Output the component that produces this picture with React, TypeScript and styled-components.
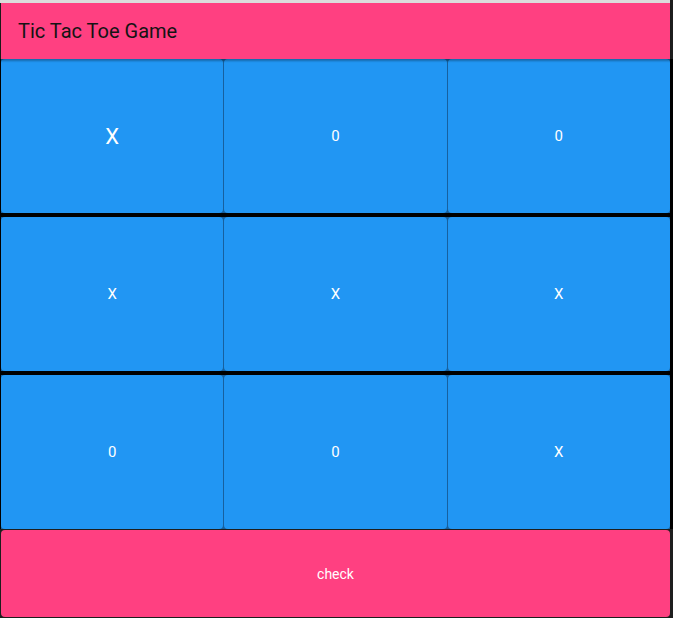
import React from "react";
import styled, { createGlobalStyle } from "styled-components";

const Global = createGlobalStyle`
  html, body { margin: 0; padding: 0; background: #1e1e1e; }
  body { font-family: Roboto, "Noto Sans", sans-serif; }
`;

const Page = styled.div`
  width: 673px;
  height: 618px;
  display: flex;
  flex-direction: column;
  background: #1e1e1e;
  overflow: hidden;
`;

const TopLine = styled.div`
  height: 3px;
  margin-right: 3px;
  background: #dcdcdc;
`;

const AppBar = styled.header`
  height: 56px;
  margin-right: 3px;
  margin-left: 1px;
  background: #ff4081;
  display: flex;
  align-items: center;
  padding-left: 17px;
  box-sizing: border-box;
  font-size: 20px;
  color: #141414;
  box-shadow: 0 2px 2px rgba(0, 0, 0, 0.3);
  position: relative;
  z-index: 1;
`;

const Board = styled.div`
  display: flex;
  flex-direction: column;
  gap: 4px;
  background: #000;
  padding: 0 3px 0 1px;
`;

const Row = styled.div`
  display: flex;
  gap: 1px;
  height: 154px;
  background: #17609e;
`;

const Cell = styled.button<{ $big?: boolean }>`
  flex: 1;
  border: none;
  margin: 0;
  padding: 0;
  background: #2196f3;
  border-radius: 4px;
  color: #fff;
  font-family: Roboto, "Noto Sans", sans-serif;
  font-size: ${(p) => (p.$big ? "22px" : "15px")};
  display: flex;
  align-items: center;
  justify-content: center;
  cursor: pointer;
`;

const CheckButton = styled.button`
  margin: 1px 3px 1px 1px;
  height: 87px;
  border: none;
  border-radius: 4px;
  background: #ff4081;
  color: #fff;
  font-family: Roboto, "Noto Sans", sans-serif;
  font-size: 14px;
  cursor: pointer;
`;

const board = [
  ["X", "0", "0"],
  ["X", "X", "X"],
  ["0", "0", "X"],
];

export default function App() {
  return (
    <>
      <Global />
      <Page>
        <TopLine />
        <AppBar>Tic Tac Toe Game</AppBar>
        <Board>
          {board.map((row, r) => (
            <Row key={r}>
              {row.map((v, c) => (
                <Cell key={c} $big={r === 0 && c === 0}>
                  {v}
                </Cell>
              ))}
            </Row>
          ))}
        </Board>
        <CheckButton>check</CheckButton>
      </Page>
    </>
  );
}
